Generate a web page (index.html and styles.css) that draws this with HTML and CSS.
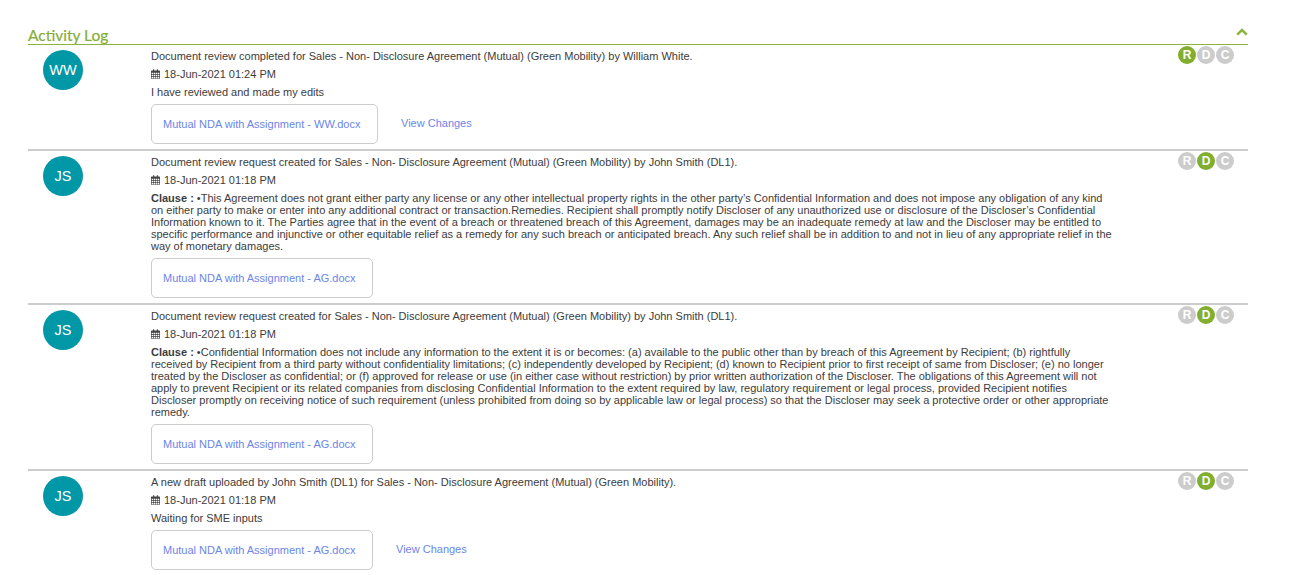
FILE: index.html
```html
<!DOCTYPE html>
<html lang="en">
<head>
<meta charset="utf-8">
<title>Activity Log</title>
<link rel="stylesheet" href="styles.css">
</head>
<body>
<svg class="defs" width="0" height="0" aria-hidden="true">
  <symbol id="cal" viewBox="0 0 13 14">
    <path fill="#444" d="M3 0h1.6v2H8.4V0H10v2h2a1 1 0 0 1 1 1v10a1 1 0 0 1-1 1H1a1 1 0 0 1-1-1V3a1 1 0 0 1 1-1h2zM1 5.2v1.9h2.2V5.2zm3.1 0v1.9h2V5.2zm2.9 0v1.9h2V5.2zm2.900 0v1.900H12V5.200zM1 8v1.900h2.200V8zm3.100 0v1.900h2V8zm2.900 0v1.900h2V8zm2.900 0v1.900H12V8zM1 10.800V13h2.200v-2.200zm3.100 0V13h2v-2.200zm2.900 0V13h2v-2.200zm2.900 0V13H12v-2.200z"/>
  </symbol>
</svg>
<section class="log">
  <header class="log-head">
    <h2 class="log-title">Activity Log</h2>
    <svg class="chevron" width="12" height="8" viewBox="0 0 12 8" aria-hidden="true"><path d="M1.200 6.600 6 2l4.800 4.600" fill="none" stroke="#8db33f" stroke-width="2.500"/></svg>
  </header>

  <article class="entry">
    <div class="avatar">WW</div>
    <div class="body">
      <p class="line">Document review completed for Sales - Non- Disclosure Agreement (Mutual) (Green Mobility) by William White.</p>
      <p class="line"><svg class="cal"><use href="#cal"/></svg>18-Jun-2021 01:24 PM</p>
      <p class="line">I have reviewed and made my edits</p>
      <div class="files">
        <a class="file wide">Mutual NDA with Assignment - WW.docx</a>
        <a class="changes">View Changes</a>
      </div>
    </div>
    <div class="steps"><span class="step on">R</span><span class="step">D</span><span class="step">C</span></div>
  </article>

  <article class="entry">
    <div class="avatar">JS</div>
    <div class="body">
      <p class="line">Document review request created for Sales - Non- Disclosure Agreement (Mutual) (Green Mobility) by John Smith (DL1).</p>
      <p class="line"><svg class="cal"><use href="#cal"/></svg>18-Jun-2021 01:18 PM</p>
      <p class="clause"><b>Clause : </b>•This Agreement does not grant either party any license or any other intellectual property rights in the other party’s Confidential Information and does not impose any obligation of any kind on either party to make or enter into any additional contract or transaction.Remedies. Recipient shall promptly notify Discloser of any unauthorized use or disclosure of the Discloser’s Confidential Information known to it. The Parties agree that in the event of a breach or threatened breach of this Agreement, damages may be an inadequate remedy at law and the Discloser may be entitled to specific performance and injunctive or other equitable relief as a remedy for any such breach or anticipated breach. Any such relief shall be in addition to and not in lieu of any appropriate relief in the way of monetary damages.</p>
      <div class="files">
        <a class="file">Mutual NDA with Assignment - AG.docx</a>
      </div>
    </div>
    <div class="steps"><span class="step">R</span><span class="step on">D</span><span class="step">C</span></div>
  </article>

  <article class="entry">
    <div class="avatar">JS</div>
    <div class="body">
      <p class="line">Document review request created for Sales - Non- Disclosure Agreement (Mutual) (Green Mobility) by John Smith (DL1).</p>
      <p class="line"><svg class="cal"><use href="#cal"/></svg>18-Jun-2021 01:18 PM</p>
      <p class="clause"><b>Clause : </b>•Confidential Information does not include any information to the extent it is or becomes: (a) available to the public other than by breach of this Agreement by Recipient; (b) rightfully received by Recipient from a third party without confidentiality limitations; (c) independently developed by Recipient; (d) known to Recipient prior to first receipt of same from Discloser; (e) no longer treated by the Discloser as confidential; or (f) approved for release or use (in either case without restriction) by prior written authorization of the Discloser. The obligations of this Agreement will not apply to prevent Recipient or its related companies from disclosing Confidential Information to the extent required by law, regulatory requirement or legal process, provided Recipient notifies Discloser promptly on receiving notice of such requirement (unless prohibited from doing so by applicable law or legal process) so that the Discloser may seek a protective order or other appropriate remedy.</p>
      <div class="files">
        <a class="file">Mutual NDA with Assignment - AG.docx</a>
      </div>
    </div>
    <div class="steps"><span class="step">R</span><span class="step on">D</span><span class="step">C</span></div>
  </article>

  <article class="entry">
    <div class="avatar">JS</div>
    <div class="body">
      <p class="line">A new draft uploaded by John Smith (DL1) for Sales - Non- Disclosure Agreement (Mutual) (Green Mobility).</p>
      <p class="line"><svg class="cal"><use href="#cal"/></svg>18-Jun-2021 01:18 PM</p>
      <p class="line">Waiting for SME inputs</p>
      <div class="files">
        <a class="file">Mutual NDA with Assignment - AG.docx</a>
        <a class="changes">View Changes</a>
      </div>
    </div>
    <div class="steps"><span class="step">R</span><span class="step on">D</span><span class="step">C</span></div>
  </article>
</section>
</body>
</html>
```
FILE: styles.css
```css
html, body { margin: 0; padding: 0; background: #fff; overflow: hidden; height: 575px; }
body { font-family: "Liberation Sans", Arial, sans-serif; font-size: 11px; color: #3c3c3c; }
.defs { position: absolute; }
.log { margin: 0 43px 0 28px; padding-top: 26px; }
.log-head { display: flex; justify-content: space-between; align-items: flex-start; height: 18px; border-bottom: 1px solid #8db33f; }
.log-title { margin: 0; font: 400 15.500px/19px Lato, sans-serif; color: #86ad38; -webkit-text-stroke: 0.2px #86ad38; }
.chevron { margin: 2px 0 0 0; }
.entry { display: flex; border-bottom: 2px solid #ccc; padding-bottom: 5px; }
.avatar { flex: none; width: 40px; height: 40px; margin: 5px 0 0 15px; border-radius: 50%; background: #0097a7; color: #fff; font-size: 14.500px; line-height: 40px; text-align: center; }
.body { flex: none; width: 962px; margin-left: 68px; padding-top: 2px; }
.line { margin: 0; height: 18px; line-height: 18px; white-space: nowrap; }
.cal { width: 9px; height: 10px; margin-right: 4px; vertical-align: -1px; }
.clause { margin: 0 0 6px; padding-top: 3px; line-height: 12px; }
.files { display: flex; align-items: center; margin-top: 3px; }
.file { box-sizing: border-box; width: 222px; height: 40px; padding-left: 11px; border: 1px solid #ccc; border-radius: 5px; line-height: 38px; color: #6b85e8; white-space: nowrap; }
.file.wide { width: 227px; }
.changes { margin: -2px 0 0 23px; color: #6b85e8; }
.steps { flex: none; display: flex; margin: 1px 0 0 65px; gap: 1px; height: 18px; }
.step { width: 18px; height: 18px; border-radius: 50%; background: #ccc; color: #fff; font-weight: 700; font-size: 12px; line-height: 18px; text-align: center; }
.step.on { background: #82ae2f; }
```
